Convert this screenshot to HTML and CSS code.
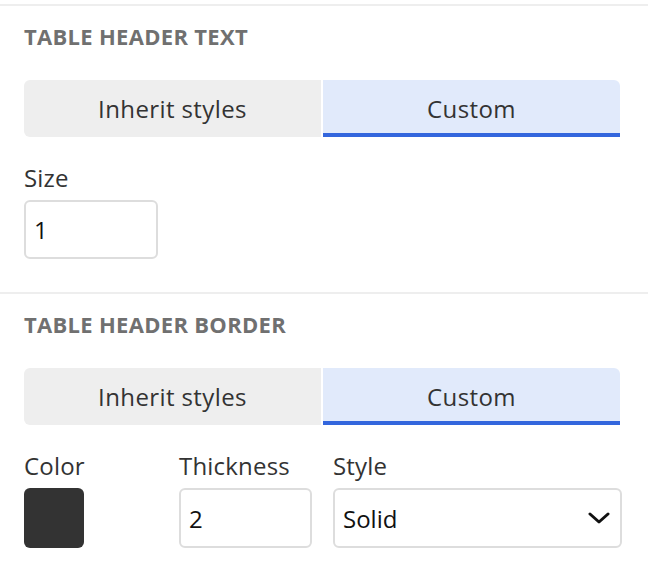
FILE: index.html
```html
<!DOCTYPE html>
<html lang="en">
<head>
  <meta charset="UTF-8" />
  <meta name="viewport" content="width=device-width, initial-scale=1.0"/>
  <title>Table Header Settings</title>
  <link rel="stylesheet" href="styles.css">
</head>
<body>

  <div class="panel">
    <section class="panel-section">
      <h3 class="section-title">TABLE HEADER TEXT</h3>
      <div class="segmented">
        <button class="seg">Inherit styles</button>
        <button class="seg active">Custom</button>
      </div>
      <div class="field">
        <label for="size">Size</label>
        <input type="text" id="size" class="text-input size-input" value="1" />
      </div>
    </section>

    <section class="panel-section">
      <h3 class="section-title">TABLE HEADER BORDER</h3>
      <div class="segmented">
        <button class="seg">Inherit styles</button>
        <button class="seg active">Custom</button>
      </div>
      <div class="field-row">
        <div class="field">
          <label>Color</label>
          <div class="swatch"></div>
        </div>
        <div class="field">
          <label for="thickness">Thickness</label>
          <input type="text" id="thickness" class="text-input thickness-input" value="2" />
        </div>
        <div class="field">
          <label>Style</label>
          <div class="select-box">
            <span>Solid</span>
            <svg width="22" height="12" viewBox="0 0 22 12">
              <path d="M2 2 L11 10 L20 2" fill="none" stroke="#111" stroke-width="3" stroke-linecap="round" stroke-linejoin="round"/>
            </svg>
          </div>
        </div>
      </div>
    </section>
  </div>

</body>
</html>
```

FILE: styles.css
```css
body {
  font-family: 'Open Sans', sans-serif;
  margin: 0;
  padding: 0;
  background: #fff;
  color: #333;
}

.panel {
  padding-top: 4px;
}

.panel-section {
  border-top: 2px solid #eeeeee;
  padding: 16px 26px 33px 24px;
}

.section-title {
  margin: 0 0 30px;
  font-size: 22px;
  line-height: 28px;
  letter-spacing: 0.3px;
  font-weight: 700;
  color: #707070;
}

.segmented {
  display: flex;
  gap: 2px;
  margin-right: 2px;
}

.seg {
  flex: 1;
  height: 57px;
  border: none;
  background: #eeeeee;
  font-family: inherit;
  font-size: 24px;
  letter-spacing: 0.4px;
  color: #333;
  padding: 0;
}

.seg:first-child {
  border-radius: 6px 0 0 6px;
}

.seg:last-child {
  border-radius: 0 6px 0 0;
}

.seg.active {
  background: #e1eafb;
  box-shadow: inset 0 -4px 0 #3366dd;
}

.field {
  margin-top: 26px;
}

.field label {
  display: block;
  font-size: 24px;
  line-height: 30px;
  letter-spacing: 0.2px;
  margin-bottom: 7px;
}

.text-input {
  box-sizing: border-box;
  height: 59px;
  border: 2px solid #dddddd;
  border-radius: 6px;
  padding: 0 8px;
  font-family: inherit;
  font-size: 24px;
  color: #111;
}

.size-input {
  width: 134px;
}

.field-row {
  display: grid;
  grid-template-columns: 155px 154px 1fr;
  margin-top: 26px;
}

.field-row .field {
  margin-top: 0;
}

.swatch {
  width: 60px;
  height: 60px;
  border-radius: 6px;
  background: #333333;
}

.thickness-input {
  width: 133px;
  height: 60px;
}

.select-box {
  box-sizing: border-box;
  height: 60px;
  border: 2px solid #dddddd;
  border-radius: 6px;
  padding: 0 10px 0 8px;
  display: flex;
  align-items: center;
  justify-content: space-between;
  font-size: 24px;
  color: #111;
}
```
